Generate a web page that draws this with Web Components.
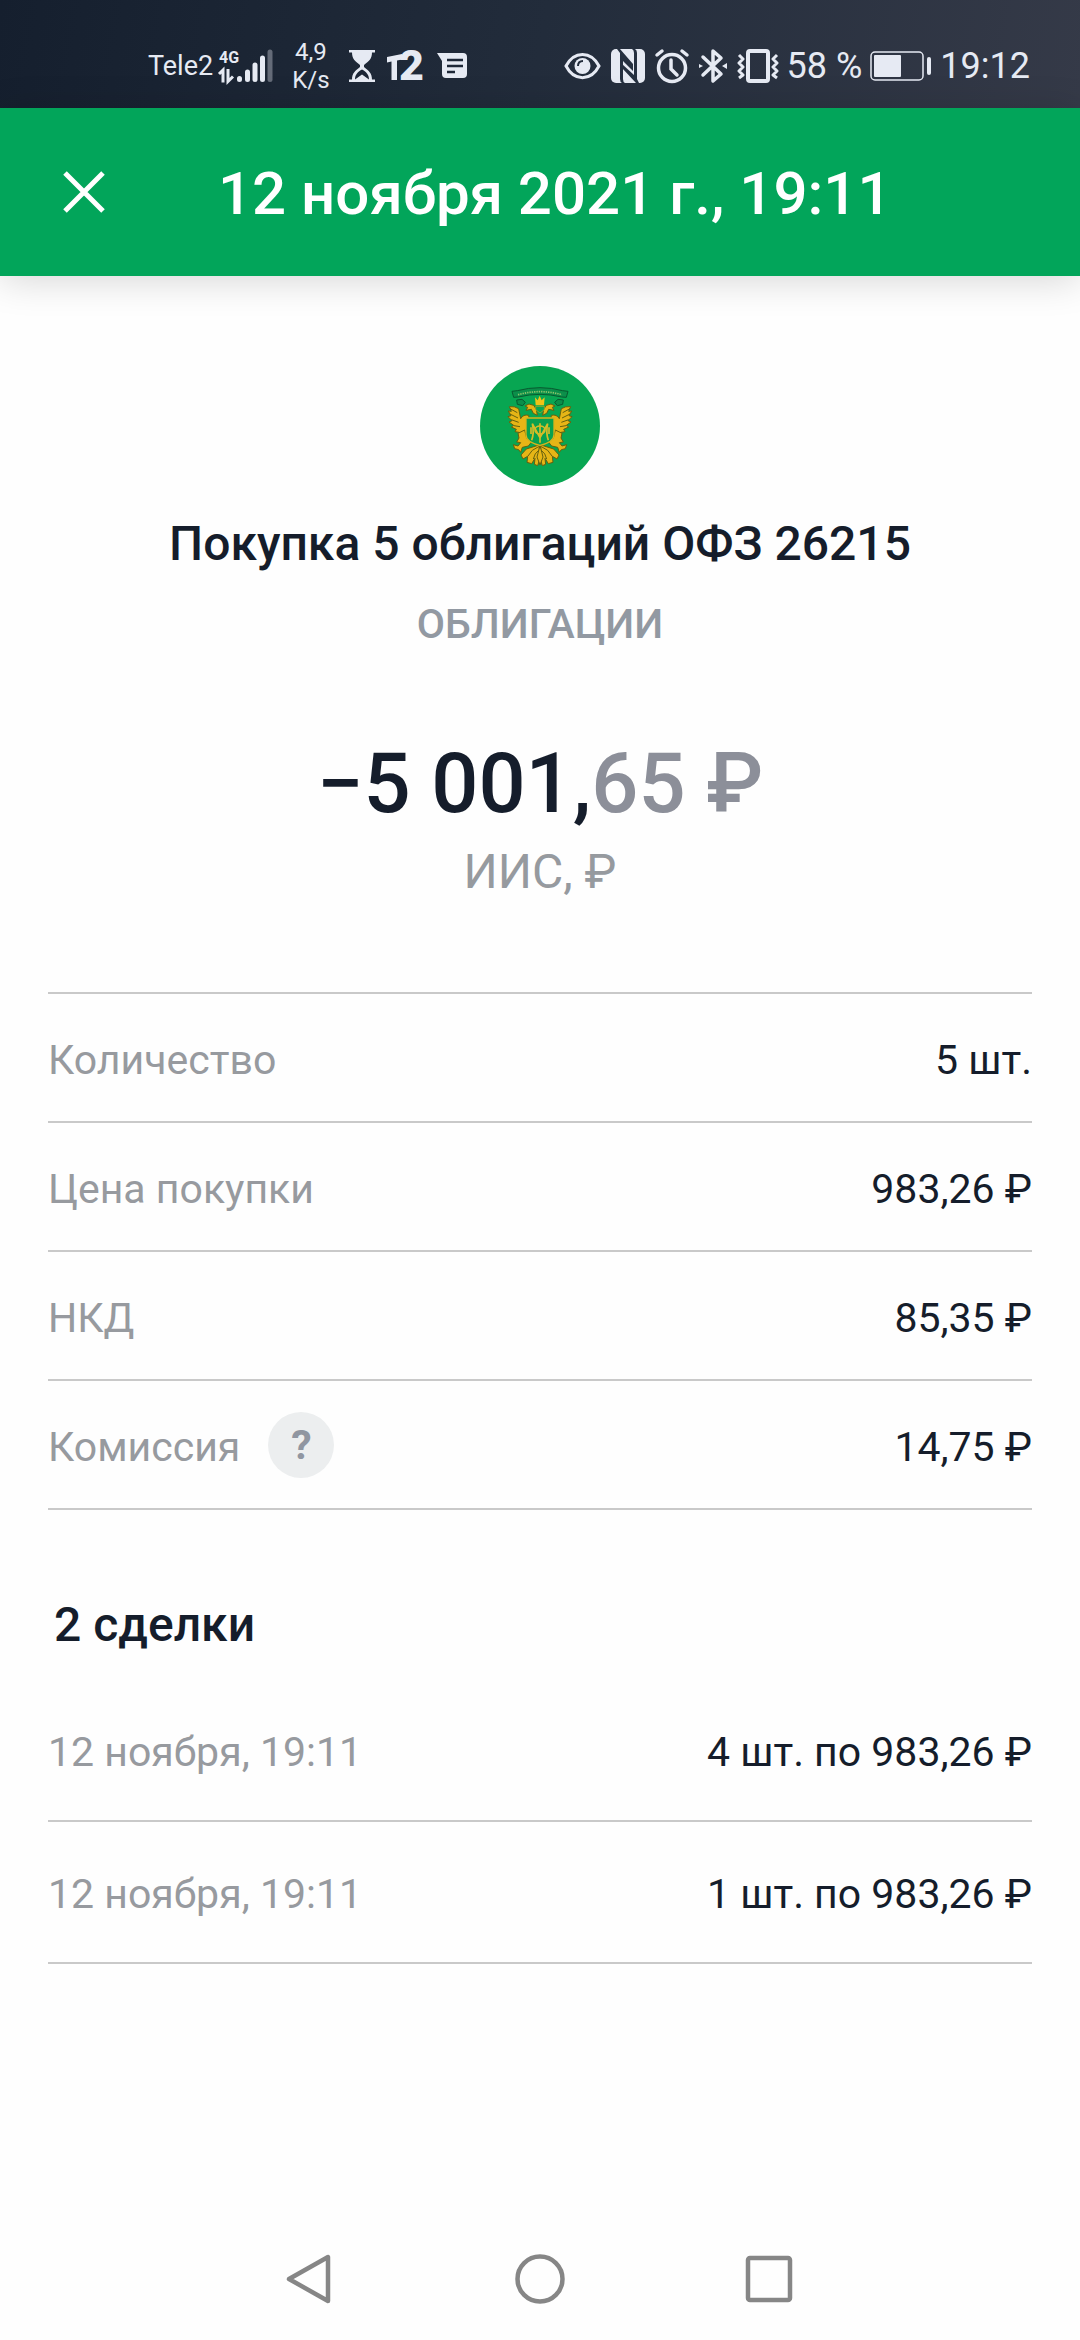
<!DOCTYPE html>
<html lang="ru">
<head>
<meta charset="utf-8">
<meta name="viewport" content="width=device-width, initial-scale=1">
<title>Покупка облигаций</title>
<style>
  html, body { margin: 0; }
  body { font-family: Roboto, "Noto Sans", sans-serif; color: #151d2b; background: #fefefe; }
</style>
</head>
<body>
<operation-page></operation-page>

<script>
const define = (tag, html) => {
  const template = document.createElement('template');
  template.innerHTML = html;
  customElements.define(tag, class extends HTMLElement {
    constructor() {
      super();
      this.attachShadow({ mode: 'open' }).append(template.content.cloneNode(true));
    }
  });
};

/* Status bar glyphs: [width, height, markup] */
const icons = {
  signal: [54, 36, `<text x="0" y="15" font-size="16" font-weight="700" font-family="Roboto, sans-serif">4G</text>
    <path d="M0 26l4-4v12.500M9 21v12.500l5-5" fill="none" stroke="currentColor" stroke-width="3"/>
    <path d="M20.500 30.500v1M28.500 24v7.500M36 17v14.500M43.500 10v21.500" stroke="currentColor" stroke-width="5" stroke-linecap="round" fill="none"/>
    <path d="M51 4v27.500" stroke="#646b78" stroke-width="5" stroke-linecap="round"/>`],
  hourglass: [26, 32, `<path d="M0 0h26v2.500H0zM0 29.500h26V32H0z"/><path d="M3 2h20c0 7-3 9-8 13v2c5 4 8 6 8 13H3c0-7 3-9 8-13v-2C6 11 3 9 3 2z"/><path d="M6 29.500c0-5 3-8 7-10 4 2 7 5 7 10l-7-5z" fill="#1b2535"/><path d="M8 30l5-4 5 4z"/>`],
  t2: [38, 56, `<path d="M0 19l15-3v5.500l-5 1V42H4.500V23.500L0 24.500z"/><text x="12" y="42" font-family="Roboto, sans-serif" font-weight="900" font-size="43">2</text>`],
  message: [30, 26, `<path d="M0 0h26q4 0 4 4v17q0 4-4 4H9q-4 0-4-4V8z"/><path d="M10 7h16M10 13h16M10 19h8" stroke="#1e2838" stroke-width="2.500"/>`],
  eye: [37, 30, `<path d="M2 15C10-.500 27-.500 35 15 27 30.500 10 30.500 2 15z" fill="none" stroke="currentColor" stroke-width="3"/><circle cx="18.500" cy="15" r="8"/><path d="M14 15c0-3 2-5 5-5" fill="none" stroke="#222c3b" stroke-width="2"/>`],
  nfc: [34, 34, `<rect width="34" height="34" rx="5"/><path d="M6 0h3l13 15v7L12 12v18q0 3 2 4h-3q-2-1-2-4V4zM28 34h-3L11 19v-4l12 11V4q0-3-2-4h3q2 1 2 4v26z" fill="#253040"/>`],
  alarm: [34, 34, `<circle cx="17" cy="19" r="13.500" fill="none" stroke="currentColor" stroke-width="3.500"/><path d="M16 11v9l6 6" fill="none" stroke="currentColor" stroke-width="3.500" stroke-linecap="round"/><path d="M2 6l5-4M32 6l-5-4" stroke="currentColor" stroke-width="3.500" stroke-linecap="round"/>`],
  bluetooth: [28, 36, `<path d="M4 9l18 17-8 7V3l8 7L4 27" fill="none" stroke="currentColor" stroke-width="3.500" stroke-linejoin="round" stroke-linecap="round"/><path d="M0 16l4 2-4 2zM28 15l-5 3 5 3z"/>`],
  vibrate: [42, 34, `<rect x="11" y="2" width="20" height="30" rx="2" fill="none" stroke="currentColor" stroke-width="4"/><path d="M2 6l4 4-4 4 4 4-4 4 4 4-4 3M40 6l-4 4 4 4-4 4 4 4-4 4 4 3" fill="none" stroke="currentColor" stroke-width="3" stroke-linejoin="round"/>`],
  battery: [62, 30, `<rect x="1" y="1" width="52" height="28" rx="4" fill="none" stroke="currentColor" stroke-width="1.500"/><rect x="4" y="4" width="27" height="22" rx="1"/><rect x="57" y="6" width="4" height="18" rx="2"/>`]
};

customElements.define('status-icon', class extends HTMLElement {
  constructor() {
    super();
    this.attachShadow({ mode: 'open' });
  }
  connectedCallback() {
    const [w, h, body] = icons[this.getAttribute('name')];
    this.shadowRoot.innerHTML = `<style>:host{display:block;flex:none} svg{display:block;overflow:visible}</style>
      <svg width="${w}" height="${h}" viewBox="0 0 ${w} ${h}" fill="currentColor" aria-hidden="true">${body}</svg>`;
  }
});

define('status-bar', `
<style>
  :host { display: flex; align-items: center; justify-content: space-between; height: 108px; box-sizing: border-box;
    padding: 24px 50px 0 148px; color: #e6eaf3; background: linear-gradient(100deg, #151f2e, #222c3b 50%, #353a48); }
  .group, .apps, .icons { display: flex; align-items: center; }
  .carrier { font-size: 27px; margin-right: 6px; }
  .speed { font-size: 24px; line-height: 28px; text-align: center; margin: 0 19px; }
  .apps { gap: 12px; }
  .icons { gap: 10px; }
  .right { gap: 8px; font-size: 36px; line-height: 40px; white-space: nowrap; }
</style>
<div class="group">
  <span class="carrier">Tele2</span><status-icon name="signal"></status-icon>
  <div class="speed">4,9<br>K/s</div>
  <div class="apps"><status-icon name="hourglass"></status-icon><status-icon name="t2"></status-icon><status-icon name="message"></status-icon></div>
</div>
<div class="group right">
  <div class="icons">
    <status-icon name="eye"></status-icon><status-icon name="nfc"></status-icon><status-icon name="alarm"></status-icon>
    <status-icon name="bluetooth"></status-icon><status-icon name="vibrate"></status-icon>
  </div>
  <span>58 %</span><status-icon name="battery"></status-icon><span>19:12</span>
</div>`);

define('app-header', `
<style>
  :host { display: flex; align-items: center; gap: 98px; height: 168px; padding: 0 48px; box-sizing: border-box;
    background: #02a55a; color: #fff; box-shadow: 0 4px 36px rgba(0,0,0,.16); }
  button { flex: none; width: 72px; height: 72px; padding: 15px; border: 0; background: none; color: inherit; }
  svg { display: block; }
  h1 { margin: 0; padding-top: 4px; font-size: 60px; line-height: 72px; font-weight: 500; }
</style>
<button type="button" aria-label="Закрыть"><svg width="42" height="42" viewBox="0 0 42 42" fill="none" stroke="currentColor" stroke-width="5"><path d="M2 2l38 38M40 2L2 40"/></svg></button>
<h1><slot></slot></h1>`);

const eagleHalf = `
    <path d="M232 196l-12-6-6-12-16 3 5-9-8-4 12-6 14 4 8 12 3 18z"/>
    <path d="M206 196q-16-4-24 10l-6-30q-12-8-28-6l6 14-9-1 8 14-9 3 12 12-9 4 14 10-7 5 15 7-4 7 17 3-2 10 18-4 12-24z"/>
    <path d="M150 176l22 12M150 192l24 12M154 209l22 8M162 227l18 3" fill="none"/>
    <path d="M194 240l-20 10 3 14-7 12 12 2-8 10-14-4 4 12 12 3 6 8 5-15 18-4 12-15-17-8z"/>
    <path d="M237 285l-38 12-16 18 6 12 14-8-2 18 14 4 10-16-2 18 10 4 7-24z"/>
    <path d="M236 290q-22 8-32 28M237 300q-14 10-17 27" fill="none"/>`;

define('issuer-logo', `
<style>:host { display: block; } svg { display: block; }</style>
<svg width="120" height="120" viewBox="60 48 360 360" role="img" aria-label="Герб">
  <circle cx="240" cy="228" r="180" fill="#08a652"/>
  <g fill="#0b8f4a" stroke="#07592f" stroke-width="3">
    <path d="M170 150l16-2 10 9-8 10-16-4zM310 150l-16-2-10 9 8 10 16-4z"/>
    <path d="M156 124l16-2q68-18 136 0l16 2-5 18-14-1q-65-16-130 0l-14 1z"/>
  </g>
  <path d="M174 134q66-18 132 0" fill="none" stroke="#8fc46a" stroke-width="5" stroke-dasharray="4 3"/>
  <g fill="#e6b516" stroke="#66600f" stroke-width="3" stroke-linejoin="round">${eagleHalf}</g>
  <g fill="#e6b516" stroke="#66600f" stroke-width="3" stroke-linejoin="round" transform="translate(480 0) scale(-1 1)">${eagleHalf}</g>
  <path d="M240 286l-9 35 9 24 9-24z" fill="#e6b516" stroke="#66600f" stroke-width="3"/>
  <path d="M198 204h84v50q0 22-42 32-42-10-42-32z" fill="#08a04f" stroke="#d8b31c" stroke-width="4"/>
  <path d="M225 142l8 9 6-14 6 14 9-9-2 24h-25z" fill="#f0c316"/>
  <path d="M227 169h26v10l-13 10-13-10z" fill="#08a652" stroke="#c2a51c" stroke-width="2"/>
  <g fill="none" stroke="#d5bd28" stroke-width="5"><path d="M215 271q8-22 2-50l23 42 23-42q-6 28 2 50M240 220v58"/><ellipse cx="240" cy="240" rx="15" ry="12"/><path d="M213 232v20M267 232v20"/></g>
</svg>`);

define('operation-summary', `
<style>
  :host { display: flex; flex-direction: column; align-items: center; padding: 90px 48px 92px; text-align: center; }
  h2 { margin: 30px 0 28px; font-size: 48px; line-height: 56px; font-weight: 500; }
  .kind { font-size: 41px; line-height: 48px; font-weight: 500; color: #9299a2; }
  .amount { margin: 88px 0 12px; font-size: 83px; line-height: 96px; font-weight: 500; white-space: nowrap; }
  .account { font-size: 48px; line-height: 56px; color: #969a9f; }
</style>
<issuer-logo></issuer-logo>
<h2><slot name="title"></slot></h2>
<div class="kind"><slot name="kind"></slot></div>
<div class="amount"><slot name="amount"></slot></div>
<div class="account"><slot name="account"></slot></div>`);

define('detail-row', `
<style>
  :host { display: flex; align-items: center; justify-content: space-between; min-height: var(--row-height, 127px);
    border-bottom: 2px solid #c9c9c9; font-size: 41px; line-height: 48px; }
  .label { display: flex; align-items: center; gap: 28px; color: #979a9f; }
  .text { padding-top: 4px; }
  .value { white-space: nowrap; }
</style>
<div class="label"><span class="text"><slot name="label"></slot></span><slot name="hint"></slot></div>
<div class="value text"><slot></slot></div>`);

define('hint-button', `
<style>
  :host { display: block; }
  button { display: block; width: 66px; height: 66px; padding: 0; border: 0; border-radius: 50%; background: #eceeef;
    color: #9096a1; font: 700 41px/66px Roboto, sans-serif; text-align: center; }
</style>
<button type="button" aria-label="Подробнее о комиссии">?</button>`);

define('row-list', `
<style>:host { display: block; margin: 0 48px; }</style><slot></slot>`);

define('section-title', `
<style>
  :host { display: block; padding: 87px 54px 27px; }
  h3 { margin: 0; font-size: 48px; line-height: 56px; font-weight: 500; }
</style><h3><slot></slot></h3>`);

define('system-nav', `
<style>
  :host { display: flex; align-items: center; justify-content: center; gap: 180px; height: 122px; margin-top: auto; }
  button { width: 50px; height: 50px; padding: 0; border: 0; background: none; }
  svg { display: block; fill: none; stroke: #868686; stroke-width: 4.5; stroke-linejoin: round; }
</style>
<button type="button" aria-label="Назад"><svg width="50" height="50" viewBox="0 0 50 50"><path d="M43 3v44L4 25z"/></svg></button>
<button type="button" aria-label="Домой"><svg width="50" height="50" viewBox="0 0 50 50"><circle cx="25" cy="25" r="22.500"/></svg></button>
<button type="button" aria-label="Недавние"><svg width="50" height="50" viewBox="0 0 50 50"><rect x="3" y="4" width="42" height="42" rx="2"/></svg></button>`);

define('operation-page', `
<style>
  :host { display: flex; flex-direction: column; min-height: 100vh; }
  .fraction { color: #8c8f99; }
  .trades { --row-height: 140px; }
  .details { border-top: 2px solid #c9c9c9; }
</style>
<status-bar></status-bar>
<app-header>12 ноября 2021 г., 19:11</app-header>
<operation-summary>
  <span slot="title">Покупка 5 облигаций ОФЗ 26215</span>
  <span slot="kind">ОБЛИГАЦИИ</span>
  <span slot="amount">−5 001,<span class="fraction">65 ₽</span></span>
  <span slot="account">ИИС, ₽</span>
</operation-summary>
<row-list class="details">
  <detail-row><span slot="label">Количество</span>5 шт.</detail-row>
  <detail-row><span slot="label">Цена покупки</span>983,26 ₽</detail-row>
  <detail-row><span slot="label">НКД</span>85,35 ₽</detail-row>
  <detail-row><span slot="label">Комиссия</span><hint-button slot="hint"></hint-button>14,75 ₽</detail-row>
</row-list>
<section-title>2 сделки</section-title>
<row-list class="trades">
  <detail-row><span slot="label">12 ноября, 19:11</span>4 шт. по 983,26 ₽</detail-row>
  <detail-row><span slot="label">12 ноября, 19:11</span>1 шт. по 983,26 ₽</detail-row>
</row-list>
<system-nav></system-nav>`);
</script>
</body>
</html>
